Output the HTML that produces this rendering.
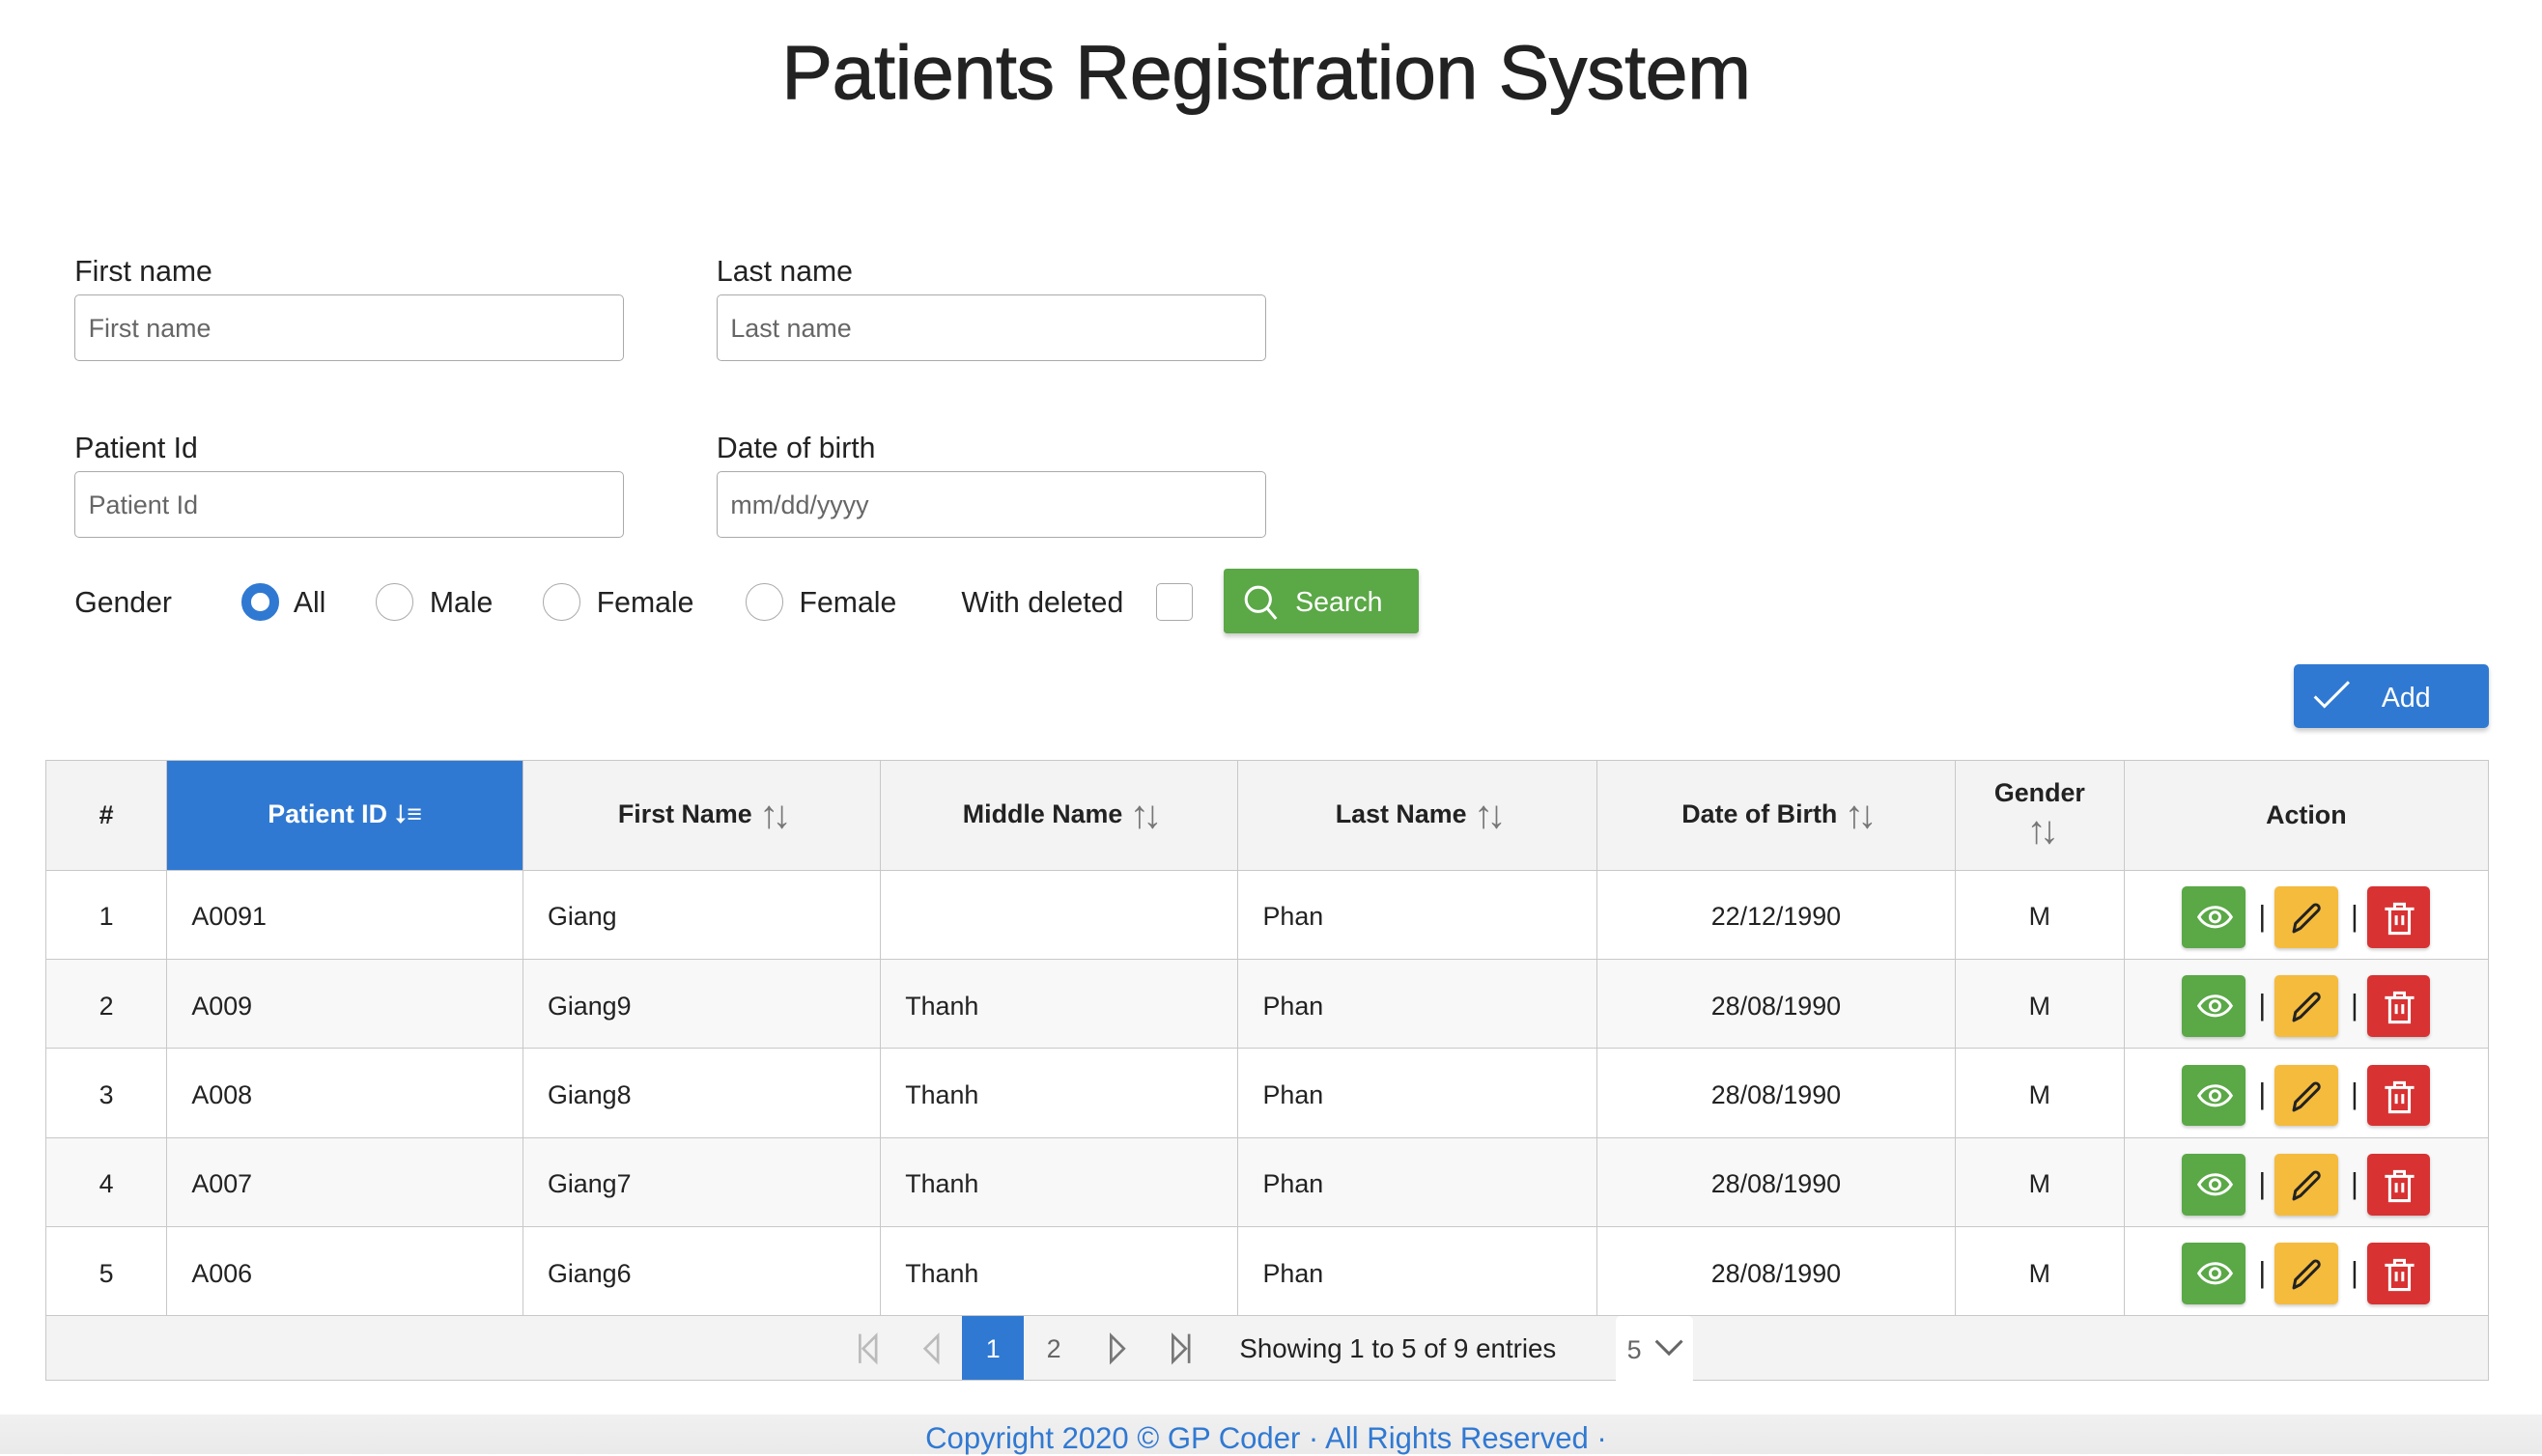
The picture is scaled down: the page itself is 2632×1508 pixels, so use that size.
<!DOCTYPE html>
<html><head><meta charset="utf-8"><style>
html,body{margin:0;padding:0;background:#fff;}
body{width:2632px;height:1506px;overflow:hidden;}
#w{position:relative;width:1568px;height:897px;zoom:1.67857;font-family:"Liberation Sans",sans-serif;color:#222;}
.a{position:absolute;}
h1{position:absolute;left:0;width:1562px;top:18px;margin:0;text-align:center;font-size:47px;font-weight:normal;color:#222;letter-spacing:-0.2px;-webkit-text-stroke:0.6px #222;}
.lbl{font-size:18px;color:#222;}
.inp{position:absolute;width:339px;height:41px;border:1px solid #aaa;border-radius:3px;box-sizing:border-box;font-size:16px;color:#666;padding:11px 8px;line-height:18px;}
.radio{position:absolute;width:23px;height:23px;border:1px solid #aaa;border-radius:50%;box-sizing:border-box;top:360px;}
.rl{position:absolute;top:362px;font-size:18px;}
table{position:absolute;left:28px;top:469px;border-collapse:collapse;width:1507px;font-size:16px;}
td,th{border:1px solid #c8c8c8;padding:0;}
th{background:#f3f3f3;height:67px;font-weight:bold;font-size:16px;}
td{height:55px;padding-top:3px;box-sizing:border-box}
tr.z td{background:#f8f8f8;}
.c{text-align:center}.l{padding-left:15px}
.s{color:#777;font-weight:normal;font-size:24px;letter-spacing:-4px;vertical-align:-3px;}
.btn{display:inline-block;width:39px;height:38px;border-radius:3px;vertical-align:middle;box-shadow:0 1px 2px rgba(0,0,0,.2);position:relative}
.btn svg{position:absolute;left:9px;top:9px}
.sep{display:inline-block;width:2px;margin:0 8px;vertical-align:middle;font-size:18px}
</style></head><body><div id="w">
<h1>Patients Registration System</h1>
<div class="a lbl" style="left:46px;top:158px">First name</div>
<div class="a lbl" style="left:442px;top:158px">Last name</div>
<div class="inp" style="left:46px;top:182px">First name</div>
<div class="inp" style="left:442px;top:182px">Last name</div>
<div class="a lbl" style="left:46px;top:267px">Patient Id</div>
<div class="a lbl" style="left:442px;top:267px">Date of birth</div>
<div class="inp" style="left:46px;top:291px">Patient Id</div>
<div class="inp" style="left:442px;top:291px">mm/dd/yyyy</div>
<div class="rl" style="left:46px">Gender</div>
<div class="radio" style="left:149px;border:6px solid #3079d2"></div><div class="rl" style="left:181px">All</div>
<div class="radio" style="left:232px"></div><div class="rl" style="left:265px">Male</div>
<div class="radio" style="left:335px"></div><div class="rl" style="left:368px">Female</div>
<div class="radio" style="left:460px"></div><div class="rl" style="left:493px">Female</div>
<div class="rl" style="left:593px">With deleted</div>
<div class="a" style="left:713px;top:360px;width:23px;height:23px;border:1px solid #aaa;border-radius:3px;box-sizing:border-box"></div>
<div class="a" style="left:755px;top:351px;width:120px;height:40px;background:#5aa846;border-radius:2px;box-shadow:0 2px 3px rgba(0,0,0,.2);color:#fff;font-size:17px">
<svg class="a" style="left:11px;top:9px" width="24" height="24" viewBox="0 0 24 24" fill="none" stroke="#fff" stroke-width="1.8"><circle cx="10" cy="10" r="7.5"/><path d="M15.5 15.5L21 22"/></svg>
<span class="a" style="left:44px;top:11px">Search</span></div>
<div class="a" style="left:1415px;top:410px;width:120px;height:39px;background:#3079d2;border-radius:3px;box-shadow:0 2px 3px rgba(0,0,0,.2);color:#fff;font-size:17px">
<svg class="a" style="left:12px;top:9px" width="24" height="20" viewBox="0 0 24 20" fill="none" stroke="#fff" stroke-width="1.8"><path d="M1 11l6 6L22 2"/></svg>
<span class="a" style="left:54px;top:11px">Add</span></div>
<table>
<tr><th style="width:74px">#</th><th style="width:219px;background:#3079d2;color:#fff">Patient ID <span style="font-weight:normal">⭣≡</span></th><th style="width:220px">First Name <span class="s">↑↓</span></th><th style="width:220px">Middle Name <span class="s">↑↓</span></th><th style="width:221px">Last Name <span class="s">↑↓</span></th><th style="width:220px">Date of Birth <span class="s">↑↓</span></th><th style="width:104px">Gender<br><span class="s">↑↓</span></th><th>Action</th></tr>
<tr><td class="c">1</td><td class="l">A0091</td><td class="l">Giang</td><td class="l"></td><td class="l">Phan</td><td class="c">22/12/1990</td><td class="c">M</td><td class="c ACT"></td></tr>
<tr class="z"><td class="c">2</td><td class="l">A009</td><td class="l">Giang9</td><td class="l">Thanh</td><td class="l">Phan</td><td class="c">28/08/1990</td><td class="c">M</td><td class="c ACT"></td></tr>
<tr><td class="c">3</td><td class="l">A008</td><td class="l">Giang8</td><td class="l">Thanh</td><td class="l">Phan</td><td class="c">28/08/1990</td><td class="c">M</td><td class="c ACT"></td></tr>
<tr class="z"><td class="c">4</td><td class="l">A007</td><td class="l">Giang7</td><td class="l">Thanh</td><td class="l">Phan</td><td class="c">28/08/1990</td><td class="c">M</td><td class="c ACT"></td></tr>
<tr><td class="c">5</td><td class="l">A006</td><td class="l">Giang6</td><td class="l">Thanh</td><td class="l">Phan</td><td class="c">28/08/1990</td><td class="c">M</td><td class="c ACT"></td></tr>
<tr><td colspan="8" style="height:40px;padding:0;background:#f3f3f3;position:relative">
<div class="a" style="left:500px;top:0;height:39px;width:520px;font-size:16px">
<svg class="a" style="left:0;top:10px" width="14" height="20" viewBox="0 0 14 20" fill="none" stroke="#bbb" stroke-width="1.6"><path d="M2 1v18M12 2L4 10l8 8z"/></svg>
<svg class="a" style="left:38px;top:10px" width="14" height="20" viewBox="0 0 14 20" fill="none" stroke="#bbb" stroke-width="1.6"><path d="M12 2L4 10l8 8z"/></svg>
<div class="a" style="left:65px;top:0;width:38px;height:39px;background:#3079d2;color:#fff;text-align:center;line-height:41px">1</div>
<div class="a" style="left:117px;top:0;line-height:41px;color:#666">2</div>
<svg class="a" style="left:155px;top:10px" width="14" height="20" viewBox="0 0 14 20" fill="none" stroke="#777" stroke-width="1.6"><path d="M2 2l8 8-8 8z"/></svg>
<svg class="a" style="left:193px;top:10px" width="14" height="20" viewBox="0 0 14 20" fill="none" stroke="#777" stroke-width="1.6"><path d="M2 2l8 8-8 8zM12 1v18"/></svg>
<div class="a" style="left:236px;top:0;line-height:41px;color:#222;white-space:nowrap;font-size:16.5px">Showing 1 to 5 of 9 entries</div>
<div class="a" style="left:468px;top:0;width:48px;height:42px;background:#fff;border-radius:3px;color:#666;line-height:42px;padding-left:7px;box-sizing:border-box">5
<svg class="a" style="left:24px;top:14px" width="18" height="12" viewBox="0 0 18 12" fill="none" stroke="#666" stroke-width="1.8"><path d="M1 1l8 8 8-8"/></svg></div>
</div></td></tr>
</table>
<div class="a" style="left:0;top:873px;width:1568px;height:24px;background:linear-gradient(#f0f0f0,#eaeaea)"></div>
<div class="a" style="left:0;width:1562px;text-align:center;top:877px;font-size:18.5px;color:#3079d2">Copyright 2020 © GP Coder · All Rights Reserved ·</div>
</div>
<script>
var h='<span class="btn" style="background:#5aa846"><svg width="22" height="20" viewBox="0 0 22 20" fill="none" stroke="#fff" stroke-width="1.8"><path d="M1 10c5-8 15-8 20 0-5 8-15 8-20 0z"/><circle cx="11" cy="10" r="3"/></svg></span><span class="sep">|</span><span class="btn" style="background:#f5bb3d"><svg width="22" height="22" viewBox="0 0 22 22" fill="none" stroke="#222" stroke-width="1.8" stroke-linejoin="round"><path d="M3 19l1-5L15 3a2 2 0 013 3L7 17z"/></svg></span><span class="sep">|</span><span class="btn" style="background:#d83232"><svg width="22" height="22" viewBox="0 0 22 22" fill="none" stroke="#fff" stroke-width="1.8"><path d="M2 5h18M8 5V2h6v3M5 5v15h12V5M9 9v6M13 9v6"/></svg></span>';
document.querySelectorAll('.ACT').forEach(function(e){e.innerHTML=h});
</script>
</body></html>
